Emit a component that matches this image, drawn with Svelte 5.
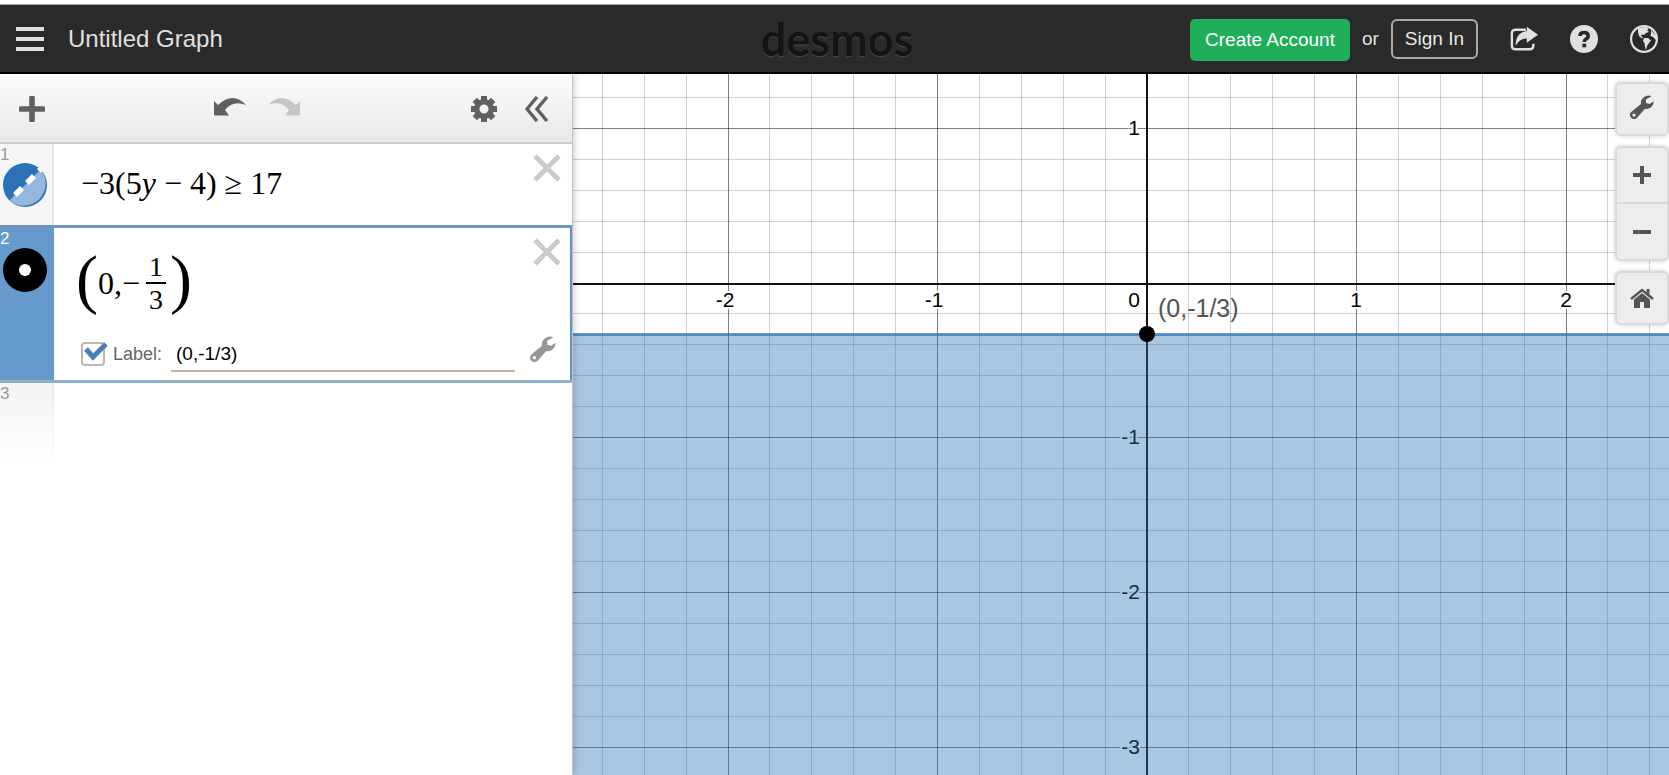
<script lang="ts">
  let graphWidth = $state(1096);
  let graphHeight = $state(701);
  let title = 'Untitled Graph';
  let showLabel = $state(true);
  let pointLabel = $state('(0,-1/3)');

  const unitX = 209.5;
  const unitY = 154.8;
  const steps = 5;
  const originY = 210;

  let originX = $derived(Math.round(graphWidth / 2) + 26);
  const boundary = Math.floor(originY + unitY / 3) - 1;

  function ticks(from: number, to: number) {
    const list: { n: number; major: boolean }[] = [];
    for (let i = Math.ceil(from * steps); i <= Math.floor(to * steps); i++) {
      if (i !== 0) list.push({ n: i / steps, major: i % steps === 0 });
    }
    return list;
  }

  let columns = $derived(ticks(-originX / unitX, (graphWidth - originX) / unitX));
  let rows = $derived(ticks(-originY / unitY, (graphHeight - originY) / unitY));

  const px = (n: number) => Math.floor(originX + n * unitX);
  const py = (n: number) => Math.floor(originY + n * unitY) - 1;
</script>

{#snippet cross()}
  <svg width="28" height="28" viewBox="0 0 28 28" aria-hidden="true">
    <path d="M2 2L26 26M26 2L2 26" stroke="#cbcbcb" stroke-width="5" />
  </svg>
{/snippet}

{#snippet wrench(size: number, color: string)}
  <svg width={size} height={size} viewBox="0 0 24 24" aria-hidden="true">
    <path
      fill={color}
      fill-rule="evenodd"
      d="M21.500 1.200A7.500 7.500 0 0 0 11 9L1.200 17A4 4 0 1 0 7 22.800L15 13.800C19.500 14.800 23.500 11.300 23.800 6.300L19.500 9L16 8L15.800 4.400ZM4 18.500A1.600 1.600 0 1 1 4 21.700A1.600 1.600 0 0 1 4 18.500Z"
    />
  </svg>
{/snippet}

<div class="calculator">
  <header class="header">
    <div class="header-left">
      <button class="icon-btn" aria-label="Open menu">
        <svg width="28" height="24" viewBox="0 0 28 24">
          <path d="M0 2H28M0 12H28M0 22H28" stroke="#e0e0e0" stroke-width="4" />
        </svg>
      </button>
      <h1 class="title">{title}</h1>
    </div>
    <div class="logo">desmos</div>
    <div class="header-right">
      <button class="create">Create Account</button>
      <span class="or">or</span>
      <button class="sign-in">Sign In</button>
      <button class="icon-btn" aria-label="Share graph">
        <svg width="28" height="26" viewBox="0 0 30 26">
          <path d="M17 3H6Q2 3 2 7V20Q2 24 6 24H21Q25 24 25 20V18" fill="none" stroke="#e0e0e0" stroke-width="2.600" />
          <path d="M18 0L30 8.500L18 17V12.500Q11 12 6 20Q6 6 18 4.500Z" fill="#e0e0e0" />
        </svg>
      </button>
      <button class="icon-btn" aria-label="Help">
        <svg width="28" height="28" viewBox="0 0 28 28">
          <circle cx="14" cy="14" r="14" fill="#e0e0e0" />
          <path d="M10 11Q10 7.500 14 7.500Q18.200 7.500 18.200 11Q18.200 13 16 14Q14.300 15 14.300 17" fill="none" stroke="#2a2a2a" stroke-width="3.600" />
          <rect x="12.400" y="18.700" width="3.800" height="3.600" fill="#2a2a2a" />
        </svg>
      </button>
      <button class="icon-btn" aria-label="Language">
        <svg width="28" height="28" viewBox="0 0 28 28">
          <circle cx="14" cy="14" r="12.900" fill="none" stroke="#e0e0e0" stroke-width="2.200" />
          <path fill="#e0e0e0" d="M8 3L16 2L19 4L17 5L19 7L16 8L14 10L12 9.500L11 11L13 12.500L12 13.500L9 11L8 7ZM14 13L18 13L21 15.500L19 18L17 21L16 25L15 22L14.500 18L13 16ZM21 5L26 11L26 15L23 12L20.500 11L21 8Z" />
        </svg>
      </button>
    </div>
  </header>

  <main class="main">
    <section class="panel" aria-label="Expressions">
      <div class="toolbar">
        <button class="icon-btn" aria-label="Add item">
          <svg width="26" height="26" viewBox="0 0 26 26">
            <path d="M13 2V24M2 13H24" stroke="#606060" stroke-width="5.600" stroke-linecap="round" />
          </svg>
        </button>
        <div class="history">
          <button class="icon-btn" aria-label="Undo">
            <svg width="32" height="20" viewBox="0 0 32 20">
              <path d="M0 4L4 8Q19-6 32 8Q19 3 11 13L15 18.500H0Z" fill="#606060" />
            </svg>
          </button>
          <button class="icon-btn" aria-label="Redo">
            <svg width="32" height="20" viewBox="0 0 32 20">
              <path d="M32 4L28 8Q13-6 0 8Q13 3 21 13L17 18.500H32Z" fill="#c6c6c6" />
            </svg>
          </button>
        </div>
        <div class="panel-tools">
          <button class="icon-btn" aria-label="Edit list">
            <svg width="26" height="26" viewBox="0 0 26 26">
              <circle cx="13" cy="13" r="7.300" fill="none" stroke="#606060" stroke-width="5.600" />
              {#each [0, 45, 90, 135] as angle}
                <path d="M13 0V5M13 21V26" stroke="#606060" stroke-width="6" transform="rotate({angle} 13 13)" />
              {/each}
            </svg>
          </button>
          <button class="icon-btn" aria-label="Hide list">
            <svg width="24" height="26" viewBox="0 0 24 26">
              <path d="M12 1L2 13L12 25M22 1L12 13L22 25" fill="none" stroke="#606060" stroke-width="3.400" />
            </svg>
          </button>
        </div>
      </div>

      <ol class="list">
        <li class="row">
          <div class="gutter">
            <span class="index">1</span>
            <button class="swatch" aria-label="Hide expression 1">
              <svg width="44" height="44" viewBox="0 0 44 44">
                <circle cx="22" cy="22" r="22" fill="#2d70b3" />
                <path d="M37.500 6.500A22 22 0 0 1 6.500 37.500Z" fill="#93b7dd" />
                <path d="M12 32L19 25M24 20L31 13M36 8L38 6" stroke="#fff" stroke-width="5.600" />
              </svg>
            </button>
          </div>
          <div class="body">
            <div class="math">
              <span>−3(5<i>y</i></span><span class="op">−</span><span>4)</span><span class="op">≥</span><span>17</span>
            </div>
            <button class="icon-btn remove" aria-label="Delete expression 1">{@render cross()}</button>
          </div>
        </li>
        <li class="row selected">
          <div class="gutter">
            <span class="index">2</span>
            <button class="swatch" aria-label="Hide expression 2">
              <svg width="44" height="44" viewBox="0 0 44 44">
                <circle cx="22" cy="22" r="22" fill="#000" />
                <circle cx="22" cy="22" r="6" fill="#fff" />
              </svg>
            </button>
          </div>
          <div class="body">
            <div class="math point">
              <span class="paren">(</span>
              <span>0,−</span>
              <span class="fraction"><span class="top">1</span><span>3</span></span>
              <span class="paren">)</span>
            </div>
            <div class="label-row">
              <label class="check">
                <span class="box">
                  <input type="checkbox" bind:checked={showLabel} />
                  {#if showLabel}
                    <svg class="tick" width="26" height="20" viewBox="0 0 26 20" aria-hidden="true">
                      <path d="M3 7L10 15L23 2" fill="none" stroke="#4a80b4" stroke-width="5" />
                    </svg>
                  {/if}
                </span>
                Label:
              </label>
              <input class="label-input" type="text" aria-label="Point label" bind:value={pointLabel} />
              <button class="icon-btn options" aria-label="Label options">{@render wrench(26, '#969696')}</button>
            </div>
            <button class="icon-btn remove" aria-label="Delete expression 2">{@render cross()}</button>
          </div>
        </li>
        <li class="row empty">
          <div class="gutter"><span class="index">3</span></div>
          <div class="body"></div>
        </li>
      </ol>
    </section>

    <section class="graph" aria-label="Graph" bind:clientWidth={graphWidth} bind:clientHeight={graphHeight}>
      <svg class="plot" width={graphWidth} height={graphHeight}>
        {#each columns as c}
          <rect class={c.major ? 'major' : 'minor'} x={px(c.n)} y="0" width="1" height={graphHeight} />
        {/each}
        {#each rows as r}
          <rect class={r.major ? 'major' : 'minor'} x="0" y={py(r.n)} width={graphWidth} height="1" />
        {/each}
        <rect class="axis" x={originX - 1} y="0" width="2" height={graphHeight} />
        <rect class="axis" x="0" y={originY - 1} width={graphWidth} height="2" />

        {#each columns.filter((c) => c.major) as c}
          <text class="number" x={px(c.n) - (c.n < 0 ? 3 : 0)} y={originY + 23} text-anchor="middle">{c.n}</text>
        {/each}
        {#each rows.filter((r) => r.major) as r}
          <text class="number" x={originX - 7} y={py(r.n) + 7} text-anchor="end">{-r.n}</text>
        {/each}
        <text class="number" x={originX - 7} y={originY + 23} text-anchor="end">0</text>

        <rect x="0" y={boundary} width={graphWidth} height={Math.max(0, graphHeight - boundary)} fill="#2d70b3" fill-opacity="0.4" />
        <rect x="0" y={boundary - 1} width={graphWidth} height="3" fill="#2d70b3" fill-opacity="0.7" />
        <circle cx={originX} cy={boundary} r="8" />
        {#if showLabel}
          <text class="point-label" x={originX + 11} y={boundary - 17}>{pointLabel}</text>
        {/if}
      </svg>

      <div class="controls">
        <div class="control-group">
          <button class="top-align" aria-label="Graph settings">{@render wrench(24, '#555')}</button>
        </div>
        <div class="control-group">
          <button aria-label="Zoom in">
            <svg width="18" height="18" viewBox="0 0 18 18"><path d="M9 0V18M0 9H18" stroke="#555" stroke-width="4" /></svg>
          </button>
          <button aria-label="Zoom out">
            <svg width="18" height="18" viewBox="0 0 18 18"><path d="M0 9H18" stroke="#555" stroke-width="4" /></svg>
          </button>
        </div>
        <div class="control-group">
          <button aria-label="Default viewport">
            <svg width="24" height="20" viewBox="0 0 24 20">
              <path d="M1 11L12 2L23 11" fill="none" stroke="#555" stroke-width="2.400" />
              <path d="M12 5L20 11.500V20H14V14H10V20H4V11.500ZM16.500 1H19.500V7L16.500 4.500Z" fill="#555" />
            </svg>
          </button>
        </div>
      </div>
    </section>
  </main>
</div>

<style>
  :global(body) {
    background: #fff;
  }
  .calculator {
    display: flex;
    flex-direction: column;
    box-sizing: border-box;
    min-height: 100vh;
    padding-top: 4px;
    font-family: 'Liberation Sans', Arial, sans-serif;
  }
  button {
    font-family: inherit;
    cursor: pointer;
  }
  svg {
    display: block;
  }
  .icon-btn {
    padding: 0;
    border: 0;
    background: none;
  }

  .header {
    display: grid;
    grid-template-columns: 1fr auto 1fr;
    align-items: center;
    box-sizing: border-box;
    height: 70px;
    padding: 0 11px 0 16px;
    border-top: 1px solid #aaa;
    border-bottom: 2px solid #000;
    background: #2a2a2a;
    color: #e0e0e0;
  }
  .header-left {
    display: flex;
    align-items: center;
    gap: 24px;
  }
  .title {
    margin: 0;
    font-size: 24px;
    font-weight: 400;
    line-height: 28px;
  }
  .logo {
    font-family: Lato, sans-serif;
    font-size: 45px;
    font-weight: 700;
    line-height: 60px;
    color: #141414;
    text-shadow: 0 1px 1px #4a4a4a;
  }
  .header-right {
    display: flex;
    align-items: center;
    justify-content: flex-end;
    gap: 32px;
    font-size: 19px;
  }
  .create,
  .sign-in {
    height: 42px;
    padding: 0 15px;
    border: 0;
    border-radius: 5px;
    background: #1fae5a;
    color: #fff;
    font-size: 19px;
    white-space: nowrap;
  }
  .create {
    margin-top: 2px;
  }
  .sign-in {
    height: 40px;
    padding: 0 12px;
    border: 2px solid #aaa;
    border-radius: 6px;
    background: none;
    color: #e8e8e8;
  }
  .or {
    margin: 0 -20px;
  }

  .main {
    display: flex;
    flex: 1;
  }
  .panel {
    position: relative;
    z-index: 1;
    flex: none;
    width: 572px;
    border-right: 1px solid #c4c4c4;
    background: #fff;
    box-shadow: 0 0 8px rgba(0, 0, 0, 0.25);
    clip-path: inset(0 -12px 0 0);
  }
  .toolbar {
    display: grid;
    grid-template-columns: 1fr auto 1fr;
    align-items: center;
    box-sizing: border-box;
    height: 70px;
    padding: 2px 23px 0 19px;
    border-bottom: 2px solid #ccc;
    background: linear-gradient(#fcfcfc, #e8e8e8);
  }
  .history {
    display: flex;
    gap: 22px;
    margin: 0 54px 4px 0;
  }
  .panel-tools {
    display: flex;
    justify-content: flex-end;
    gap: 28px;
  }
  .list {
    margin: 0;
    padding: 0;
    list-style: none;
  }
  .row {
    display: flex;
    min-height: 81px;
  }
  .gutter {
    display: flex;
    flex: none;
    flex-direction: column;
    box-sizing: border-box;
    width: 54px;
    border-right: 2px solid #e8e8e8;
    background: #f6f6f6;
  }
  .index {
    height: 19px;
    font-size: 17px;
    line-height: 22px;
    color: #999;
  }
  .swatch {
    width: 44px;
    height: 44px;
    margin-left: 3px;
    padding: 0;
    border: 0;
    background: none;
  }
  .body {
    position: relative;
    flex: 1;
    padding-left: 27px;
  }
  .remove {
    position: absolute;
    top: 10px;
    right: 11px;
  }
  .math {
    display: flex;
    align-items: center;
    height: 78px;
    font-family: 'Liberation Serif', 'Times New Roman', serif;
    font-size: 32px;
    line-height: 36px;
    color: #000;
  }
  .op {
    margin: 0 8px;
  }
  .selected {
    box-sizing: border-box;
    min-height: 158px;
    border-top: 3px solid #6d97b8;
    border-bottom: 3px solid #8fb0cb;
    background: #fff;
  }
  .selected .gutter {
    border-color: #6699cc;
    background: #6699cc;
  }
  .selected .index {
    height: 20px;
    color: #fff;
  }
  .selected .body {
    border-right: 2px solid #6494c4;
  }
  .selected .remove {
    right: 9px;
  }
  .point {
    height: 110px;
    margin-left: -5px;
  }
  .paren {
    padding-bottom: 8px;
    font-size: 66px;
    line-height: 68px;
  }
  .fraction {
    display: flex;
    flex-direction: column;
    width: 20px;
    margin: 0 4px 0 6px;
    font-size: 28px;
    line-height: 31px;
    text-align: center;
  }
  .top {
    border-bottom: 2px solid #000;
  }
  .label-row {
    display: flex;
    align-items: center;
    height: 32px;
    padding-right: 14px;
  }
  .check {
    display: flex;
    align-items: center;
    gap: 8px;
    font-size: 18px;
    color: #666;
  }
  .box {
    position: relative;
  }
  .box input {
    display: block;
    width: 24px;
    height: 24px;
    margin: 0;
    border: 2px solid #bbb8b4;
    border-radius: 4px;
    background: #fff;
    appearance: none;
  }
  .tick {
    position: absolute;
    top: 0;
    left: 2px;
    pointer-events: none;
  }
  .label-input {
    flex: 1;
    min-width: 0;
    height: 32px;
    margin: 0 15px 0 9px;
    padding: 2px 5px 0;
    border: 0;
    border-bottom: 2px solid #b8b5b2;
    background: none;
    font-family: inherit;
    font-size: 19px;
    color: #000;
  }
  .options {
    margin-bottom: 10px;
  }
  .empty .gutter {
    border-image: linear-gradient(#e8e8e8, #fff) 1;
    background: linear-gradient(#f4f4f4, #fff);
  }

  .graph {
    position: relative;
    flex: 1;
    min-width: 0;
    overflow: hidden;
    background: #fff;
  }
  .plot {
    position: absolute;
    inset: 0;
  }
  .minor {
    fill: #000;
    fill-opacity: 0.18;
  }
  .major {
    fill: #000;
    fill-opacity: 0.5;
  }
  .axis {
    fill: #111;
  }
  .number {
    font-size: 21px;
    fill: #000;
    stroke: #fff;
    stroke-width: 4px;
    paint-order: stroke;
  }
  .point-label {
    font-size: 25px;
    fill: #555;
  }
  .controls {
    position: absolute;
    top: 8px;
    right: 0;
    display: flex;
    flex-direction: column;
    gap: 10px;
  }
  .control-group {
    display: flex;
    flex-direction: column;
    box-sizing: border-box;
    width: 54px;
    border: 2px solid #dadada;
    border-radius: 6px;
    background: #ededed;
    box-shadow: 0 0 4px rgba(0, 0, 0, 0.2);
  }
  .control-group button {
    display: flex;
    align-items: center;
    justify-content: center;
    height: 54px;
    padding: 0;
    border: 0;
    background: none;
  }
  .control-group button:only-child {
    height: 50px;
  }
  .control-group .top-align {
    padding-bottom: 4px;
  }
  .control-group button + button {
    height: 57px;
    border-top: 2px solid #dadada;
  }
</style>
